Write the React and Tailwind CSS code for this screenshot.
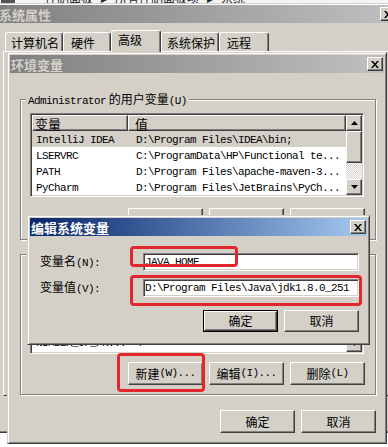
import React from "react";

const mono = "font-['Liberation_Mono',monospace] text-[11px] tracking-[-0.6px]";
const raised =
  "border border-t-white border-l-white border-r-[#404040] border-b-[#404040] shadow-[inset_-1px_-1px_0_#808080]";
const sunken =
  "border border-t-[#808080] border-l-[#808080] border-r-white border-b-white shadow-[inset_1px_1px_0_#404040,inset_-1px_-1px_0_#d4d0c8]";
const frame =
  "border border-t-[#d4d0c8] border-l-[#d4d0c8] border-r-[#404040] border-b-[#404040] shadow-[inset_1px_1px_0_#fff,inset_-1px_-1px_0_#808080]";

function M({ children }) {
  return <span className={mono}>{children}</span>;
}

function CloseBtn() {
  return (
    <div className={`w-[16px] h-[14px] bg-[#d4d0c8] flex items-center justify-center ${raised}`}>
      <svg width="8" height="7" viewBox="0 0 8 7">
        <path d="M0 0h2l2 2.5L6 0h2L5 3.5 8 7H6L4 4.5 2 7H0l3-3.5z" fill="#000" />
      </svg>
    </div>
  );
}

function Btn({ children, low }) {
  return (
    <div className={`w-[75px] h-[23px] flex justify-center bg-[#d4d0c8] ${low ? "items-end pb-[2px]" : "items-center"} ${raised}`}>
      {children}
    </div>
  );
}

function Arrow({ up }) {
  return (
    <div className={`w-[16px] h-[16px] shrink-0 flex items-center justify-center bg-[#d4d0c8] ${raised}`}>
      <svg width="7" height="4" viewBox="0 0 7 4">
        <path d={up ? "M3.5 0L7 4H0z" : "M0 0h7L3.5 4z"} fill="#000" />
      </svg>
    </div>
  );
}

function ListView({ rows, heightCls }) {
  return (
    <div className={`w-[334px] ${heightCls} bg-white flex p-[1px] ${sunken}`}>
      <div className="flex-1 flex flex-col overflow-hidden">
        <div className="h-[16px] flex shrink-0">
          <div className={`w-[96px] flex items-center pl-[2px] bg-[#d4d0c8] text-[13px] ${raised}`}>变量</div>
          <div className={`flex-1 flex items-center pl-[6px] bg-[#d4d0c8] text-[13px] ${raised}`}>值</div>
        </div>
        {rows.map((r, i) => (
          <div key={i} className={`h-[16px] shrink-0 flex items-center ${r[2] ? "bg-[#d4d0c8]" : ""}`}>
            <div className="w-[96px] pl-[4px] whitespace-nowrap">
              <M>{r[0]}</M>
            </div>
            <div className="pl-[8px] whitespace-nowrap">
              <M>{r[1]}</M>
            </div>
          </div>
        ))}
      </div>
      <div className="w-[16px] flex flex-col">
        <Arrow up />
        <div className={`h-[32px] shrink-0 bg-[#d4d0c8] ${raised}`} />
        <div className="flex-1 bg-[image:repeating-conic-gradient(#ffffff_0_25%,#d4d0c8_0_50%)] bg-[length:2px_2px]" />
        <Arrow />
      </div>
    </div>
  );
}

export default function App() {
  return (
    <div className="relative w-[388px] h-[447px] overflow-hidden bg-white font-['Noto_Sans_CJK_SC',sans-serif] text-[12px] leading-none text-black">
      {/* breadcrumb strip (cut off) */}
      <div className="h-[5px] overflow-hidden bg-[#f4f4f4]">
        <div className="flex items-center gap-[8px] -translate-y-[9px] text-[12px] text-[#222]">
          <div className="w-[14px] h-[13px] bg-[#555] ml-[1px]" />
          <span className="ml-[22px]">控制面板</span>
          <span>▸</span>
          <span>所有控制面板项</span>
          <span>▸</span>
          <span>系统</span>
        </div>
      </div>

      {/* System properties window */}
      <div className={`absolute left-[-4px] top-[3px] w-[404px] h-[430px] bg-[#d4d0c8] p-[1px] flex flex-col ${frame}`}>
        <div className="h-[18px] shrink-0 flex items-center justify-between bg-linear-to-r from-[#808080] to-[#c0c0c0]">
          <span className="pl-[1px] text-[13px] font-bold text-[#d4d0c8]">系统属性</span>
          <div className="mr-[2px]">
            <CloseBtn />
          </div>
        </div>
        <div className="h-[28px] shrink-0 flex items-end pl-[7px]">
          <div className="w-[58px] h-[19px] flex items-center pl-[5px] pt-[2px] bg-[#d4d0c8] rounded-t-[3px] border-t border-l border-r border-t-white border-l-white border-r-[#404040] shadow-[inset_-1px_0_0_#808080]">
            计算机名
          </div>
          <div className="w-[48px] h-[19px] flex items-center pl-[7px] pt-[2px] bg-[#d4d0c8] rounded-t-[3px] border-t border-l border-r border-t-white border-l-white border-r-[#404040] shadow-[inset_-1px_0_0_#808080]">
            硬件
          </div>
          <div className="relative z-10 w-[50px] h-[22px] -mb-[1px] flex items-center pl-[6px] pb-[3px] bg-[#d4d0c8] rounded-t-[3px] border-t border-l border-r border-t-white border-l-white border-r-[#404040] shadow-[inset_-1px_0_0_#808080]">
            高级
          </div>
          <div className="w-[58px] h-[19px] flex items-center pl-[5px] pt-[2px] bg-[#d4d0c8] rounded-t-[3px] border-t border-l border-r border-t-white border-l-white border-r-[#404040] shadow-[inset_-1px_0_0_#808080]">
            系统保护
          </div>
          <div className="w-[50px] h-[19px] flex items-center pl-[7px] pt-[2px] bg-[#d4d0c8] rounded-t-[3px] border-t border-l border-r border-t-white border-l-white border-r-[#404040] shadow-[inset_-1px_0_0_#808080]">
            远程
          </div>
        </div>
        <div className="ml-[5px] mr-[6px] h-[345px] shrink-0 bg-[#d4d0c8] border border-t-white border-l-white border-r-[#404040] border-b-[#404040]" />
      </div>

      {/* Environment variables dialog */}
      <div className={`absolute left-[7px] top-[52px] w-[380px] h-[392px] bg-[#d4d0c8] p-[2px] flex flex-col ${frame}`}>
        <div className="h-[18px] shrink-0 flex items-center justify-between bg-linear-to-r from-[#808080] to-[#c0c0c0]">
          <span className="pl-[1px] text-[13px] font-bold text-[#d4d0c8]">环境变量</span>
          <div className="mr-[1px]">
            <CloseBtn />
          </div>
        </div>

        <fieldset className="mt-[19px] ml-[10px] mr-[8px] border border-[#808080] shadow-[1px_1px_0_#fff,inset_1px_1px_0_#fff]">
          <legend className="ml-[5px] px-[2px] h-[14px] leading-[14px] bg-[#d4d0c8]">
            <M>Administrator</M> 的用户变量<M>(U)</M>
          </legend>
          <div className="pl-[9px] pt-[7px] pb-[8px]">
            <ListView
              heightCls="h-[84px]"
              rows={[
                ["IntelliJ IDEA", "D:\\Program Files\\IDEA\\bin;", true],
                ["LSERVRC", "C:\\ProgramData\\HP\\Functional te..."],
                ["PATH", "D:\\Program Files\\apache-maven-3..."],
                ["PyCharm", "D:\\Program Files\\JetBrains\\PyCh..."],
              ]}
            />
            <div className="flex gap-[6px] ml-[98px] mt-[11px]">
              <Btn low>
                新建<M>(N)...</M>
              </Btn>
              <Btn low>
                编辑<M>(E)...</M>
              </Btn>
              <Btn low>
                删除<M>(D)</M>
              </Btn>
            </div>
          </div>
        </fieldset>

        <fieldset className="mt-[7px] ml-[10px] mr-[8px] border border-[#808080] shadow-[1px_1px_0_#fff,inset_1px_1px_0_#fff]">
          <legend className="ml-[5px] px-[2px] h-[14px] leading-[14px] bg-[#d4d0c8]">
            系统变量<M>(S)</M>
          </legend>
          <div className="pl-[9px] pt-[7px] pb-[9px]">
            <ListView
              heightCls="h-[86px]"
              rows={[
                ["ComSpec", "C:\\Windows\\system32\\cmd.exe"],
                ["FP_NO_HOST_C...", "NO"],
                ["JAVA_HOME", "D:\\Program Files\\Java\\jdk1.8.0_251"],
                ["NUMBER_OF_PR...", "4"],
                ["OS", "Windows_NT"],
              ]}
            />
            <div className="flex gap-[6px] ml-[98px] mt-[8px]">
              <Btn>
                新建<M>(W)...</M>
              </Btn>
              <Btn>
                编辑<M>(I)...</M>
              </Btn>
              <Btn>
                删除<M>(L)</M>
              </Btn>
            </div>
          </div>
        </fieldset>

        <div className="flex justify-end gap-[6px] mr-[8px] mt-[15px]">
          <Btn>确定</Btn>
          <Btn>取消</Btn>
        </div>
      </div>

      {/* Edit system variable dialog */}
      <div className={`absolute left-[27px] top-[215px] w-[343px] h-[130px] bg-[#d4d0c8] p-[2px] flex flex-col ${frame}`}>
        <div className="h-[18px] shrink-0 flex items-center justify-between bg-linear-to-r from-[#0a246a] to-[#a6caf0]">
          <span className="pl-[1px] text-[13px] font-bold text-white">编辑系统变量</span>
          <div className="mr-[1px]">
            <CloseBtn />
          </div>
        </div>
        <div className="mt-[17px] flex items-center pl-[10px]">
          <div className="w-[103px] whitespace-nowrap">
            变量名<M>(N):</M>
          </div>
          <div className={`w-[216px] h-[18px] bg-white flex items-center pl-[1px] ${sunken}`}>
            <M>JAVA_HOME</M>
          </div>
        </div>
        <div className="mt-[8px] flex items-center pl-[10px]">
          <div className="w-[103px] whitespace-nowrap">
            变量值<M>(V):</M>
          </div>
          <div className={`w-[216px] h-[18px] bg-white flex items-center pl-[1px] whitespace-nowrap overflow-hidden ${sunken}`}>
            <M>D:\Program Files\Java\jdk1.8.0_251</M>
          </div>
        </div>
        <div className="mt-[13px] flex justify-end gap-[6px] pr-[8px]">
          <div className="w-[75px] h-[22px] flex border border-black">
            <div className={`flex-1 flex items-center justify-center bg-[#d4d0c8] ${raised}`}>确定</div>
          </div>
          <div className={`w-[75px] h-[22px] flex items-center justify-center bg-[#d4d0c8] ${raised}`}>取消</div>
        </div>
      </div>

      {/* red annotation boxes */}
      <div className="absolute left-[130px] top-[246px] w-[108px] h-[21px] border-[3px] border-[#e3262b] rounded-[4px]" />
      <div className="absolute left-[130px] top-[275px] w-[232px] h-[31px] border-[3px] border-[#e3262b] rounded-[4px]" />
      <div className="absolute left-[117px] top-[353px] w-[88px] h-[39px] border-[3px] border-[#e3262b] rounded-[4px]" />
    </div>
  );
}
